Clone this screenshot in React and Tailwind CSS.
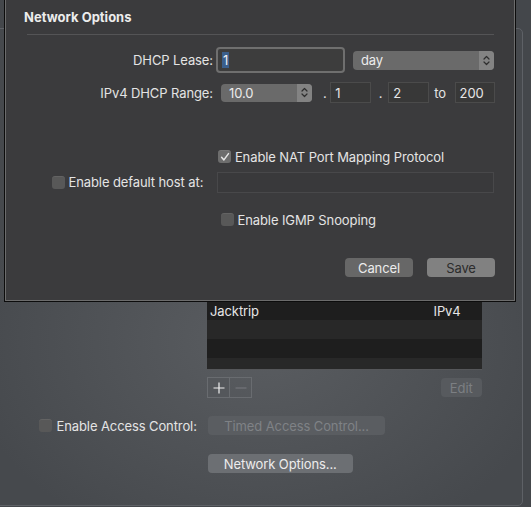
import React from 'react';

const Check = ({ checked, className = '' }) => (
  <span
    className={`flex h-[13px] w-[13px] shrink-0 items-center justify-center rounded-[3px] shadow-[inset_0_1px_0_rgba(255,255,255,0.07)] ${
      checked ? 'bg-[#6d6d6d]' : 'bg-[#585858]'
    } ${className}`}
  >
    {checked && (
      <svg width="10" height="10" viewBox="0 0 10 10">
        <path d="M1.6 5.3 L3.9 7.9 L8.5 1.6" fill="none" stroke="#e6e6e6" strokeWidth="1.5" strokeLinecap="round" strokeLinejoin="round" />
      </svg>
    )}
  </span>
);

const UpDown = () => (
  <svg width="7" height="11" viewBox="0 0 7 11">
    <path d="M1 4 L3.5 1.5 L6 4 M1 7 L3.5 9.5 L6 7" fill="none" stroke="#2e2e2e" strokeWidth="1.2" strokeLinecap="round" strokeLinejoin="round" />
  </svg>
);

const Popup = ({ value, className = '' }) => (
  <div className={`flex items-stretch overflow-hidden rounded-[4px] bg-[#6a6a6a] ${className}`}>
    <span className="flex flex-1 items-center pl-[8px] text-[#ececec]">{value}</span>
    <span className="flex w-[15px] items-center justify-center bg-[#838383]">
      <UpDown />
    </span>
  </div>
);

const Field = ({ value, className = '' }) => (
  <div className={`flex h-[21px] items-center border border-[#4b4b4b] bg-[#383838] pl-[4px] text-[#e6e6e6] ${className}`}>
    {value}
  </div>
);

export default function App() {
  return (
    <div className="relative h-[507px] w-[531px] overflow-hidden bg-[#44474b] font-['Inter',sans-serif] text-[13px] leading-[16px] tracking-[-0.1px] text-[#e4e4e4]">
      {/* window behind the sheet */}
      <div className="pt-[28px]">
        <div className="-ml-[12px] h-[478px] w-[535px] rounded-[5px] border border-[#5e6166] bg-[radial-gradient(ellipse_300px_220px_at_272px_312px,#5a5d61_0%,#46494d_100%)]">
          <div className="ml-[218px] mt-[253px] h-[88px] w-[275px] overflow-hidden border-b border-[#56575a]">
            <div className="h-[19px] bg-[#282828]" />
            <div className="flex h-[19px] items-center bg-[#1e1e1e] text-[#e6e6e6]">
              <span className="flex-1 pl-[3px]">Jacktrip</span>
              <span className="w-[48.5px]">IPv4</span>
            </div>
            <div className="h-[19px] bg-[#282828]" />
            <div className="h-[19px] bg-[#1e1e1e]" />
            <div className="h-[19px] bg-[#282828]" />
          </div>

          <div className="ml-[218px] mt-[7px] flex w-[275px] items-center justify-between">
            <div className="flex h-[21px] border border-[#696c70]">
              <span className="flex w-[22px] items-center justify-center border-r border-[#696c70] bg-[#54575b]">
                <svg width="12" height="12" viewBox="0 0 12 12">
                  <path d="M6 0.5 V11.5 M0.5 6 H11.5" stroke="#f0f0f0" strokeWidth="1.2" />
                </svg>
              </span>
              <span className="flex w-[21px] items-center justify-center">
                <svg width="12" height="12" viewBox="0 0 12 12">
                  <path d="M0.5 6 H11.5" stroke="#73767a" strokeWidth="1.2" />
                </svg>
              </span>
            </div>
            <span className="flex h-[19px] w-[41.5px] items-center justify-center rounded-[4px] bg-[#575a5e] text-[#7c7f83]">
              Edit
            </span>
          </div>

          <div className="mt-[18px] flex h-[19px] items-center">
            <div className="flex w-[219px] items-center pl-[50px]">
              <Check />
              <span className="ml-[4.5px]">Enable Access Control:</span>
            </div>
            <span className="flex h-[19px] w-[177px] items-center justify-center rounded-[4px] bg-[#5a5d61] text-[#7f8286]">
              Timed Access Control...
            </span>
          </div>

          <span className="ml-[219px] mt-[19px] flex h-[19px] w-[144.5px] items-center justify-center rounded-[4px] bg-[#6c6f73] text-[#ececec]">
            Network Options...
          </span>
        </div>
      </div>

      {/* sheet */}
      <div className="absolute left-[4px] top-[-4px] h-[306px] w-[512px] border border-[#0c0c0c] bg-[#3b3b3d] shadow-[inset_0_0_0_1px_#6c6c6c]">
        <div className="pl-[19px] pt-[12px] font-bold tracking-normal text-[#ececec]">Network Options</div>
        <div className="ml-[22px] mt-[9px] h-px w-[467px] bg-[#545456]" />

        <div className="mt-[11px] flex h-[28px] items-center">
          <span className="w-[208px] text-right">DHCP Lease:</span>
          <div className="ml-[5px] flex h-[22px] w-[125px] items-center rounded-[2px] bg-[#3d3d3d] pl-[4px] shadow-[0_0_0_2px_#6f6f6f]">
            <span className="bg-[#3b5f8c] px-[1px] text-[#f0f0f0]">1</span>
          </div>
          <Popup value="day" className="ml-[10px] h-[19px] w-[141px]" />
        </div>

        <div className="mt-[8px] flex h-[21px] items-center">
          <span className="w-[208px] text-right">IPv4 DHCP Range:</span>
          <Popup value="10.0" className="ml-[8px] h-[18px] w-[91px]" />
          <span className="ml-[11px]">.</span>
          <Field value="1" className="ml-[3.5px] w-[41px]" />
          <span className="ml-[7.5px]">.</span>
          <Field value="2" className="ml-[6px] w-[41px]" />
          <span className="ml-[5px]">to</span>
          <Field value="200" className="ml-[8.5px] w-[40.5px]" />
        </div>

        <div className="mt-[45.5px] flex h-[16px] items-center">
          <Check checked className="ml-[213.4px]" />
          <span className="ml-[3.5px]">Enable NAT Port Mapping Protocol</span>
        </div>

        <div className="mt-[7px] flex h-[21px] items-center">
          <Check className="ml-[46.5px]" />
          <span className="ml-[4px]">Enable default host at:</span>
          <div className="ml-auto mr-[21px] h-[21px] w-[277px] border border-[#48484a] bg-[#39393b]" />
        </div>

        <div className="mt-[19px] flex h-[16px] items-center">
          <Check className="ml-[215.5px]" />
          <span className="ml-[4px]">Enable IGMP Snooping</span>
        </div>

        <div className="mt-[30.5px] flex h-[19px] justify-end pr-[20px]">
          <span className="flex w-[68px] items-center justify-center rounded-[4px] bg-[#676767] text-[#ececec]">
            Cancel
          </span>
          <span className="ml-[14px] flex w-[68px] items-center justify-center rounded-[4px] bg-[#818181] text-[#2c2c2c]">
            Save
          </span>
        </div>
      </div>
    </div>
  );
}
